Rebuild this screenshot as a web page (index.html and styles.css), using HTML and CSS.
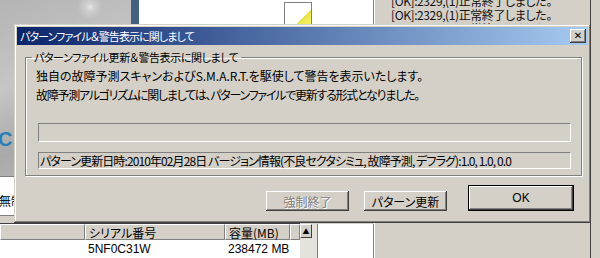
FILE: index.html
```html
<!DOCTYPE html>
<html lang="ja">
<head>
  <meta charset="UTF-8" />
  <title>パターンファイル＆警告表示に関しまして</title>
  <link rel="stylesheet" href="styles.css">
</head>
<body>
  <div class="desktop">

    <!-- background windows -->
    <div class="bg-photo"><span class="bg-c">C</span></div>
    <div class="bg-bar"></div>
    <div class="bg-white">
      <div class="bg-note"></div>
    </div>
    <div class="bg-log">
      <div class="log-line cut-top">[OK]:2329,(1)正常終了しました。</div>
      <div class="log-line">[OK]:2329,(1)正常終了しました。</div>
      <div class="log-line">[OK]:2329,(1)正常終了しました。</div>
    </div>
    <div class="bg-left-panel"><span class="left-text">無制限</span></div>

    <div class="bg-list">
      <div class="list-head">
        <div class="col col-blank"></div>
        <div class="col col-serial">シリアル番号</div>
        <div class="col col-size">容量(MB)</div>
        <div class="col col-rest"></div>
      </div>
      <div class="list-row">
        <div class="cell col-blank"></div>
        <div class="cell col-serial">5NF0C31W</div>
        <div class="cell col-size">238472 MB</div>
      </div>
    </div>
    <div class="bg-scroll">
      <div class="scroll-up">&#9650;</div>
    </div>
    <div class="bg-side"></div>

    <!-- dialog -->
    <div class="dialog">
      <div class="titlebar">
        <span class="title">パターンファイル＆警告表示に関しまして</span>
        <span class="close">&#10005;</span>
      </div>

      <fieldset class="group">
        <legend>パターンファイル更新＆警告表示に関しまして</legend>
        <p class="msg">独自の故障予測スキャンおよびS.M.A.R.T.を駆使して警告を表示いたします。</p>
        <p class="msg msg-narrow">故障予測アルゴリズムに関しましては、パターンファイルで更新する形式となりました。</p>
        <div class="progress"></div>
        <div class="status">パターン更新日時:2010年02月28日 バージョン情報(不良セクタシミュ, 故障予測, デフラグ):1.0, 1.0, 0.0</div>
      </fieldset>

      <div class="buttons">
        <button class="btn" disabled>強制終了</button>
        <button class="btn btn-update">パターン更新</button>
        <button class="btn btn-ok">OK</button>
      </div>
    </div>

  </div>
</body>
</html>
```

FILE: styles.css
```css
body {
  margin: 0;
  background: #d4d0c8;
  font-family: "Noto Sans CJK JP", "Liberation Sans", sans-serif;
  font-size: 12px;
  color: #000;
}

.desktop {
  position: relative;
  width: 600px;
  height: 258px;
  overflow: hidden;
  background: #d4d0c8;
  font-feature-settings: "palt";
}

/* ---------- background ---------- */

.bg-photo {
  position: absolute;
  left: 0;
  top: 0;
  width: 131px;
  height: 176px;
  background:
    radial-gradient(circle at 90px 7px, #e6e6e6 0, #d0d0d0 4px, transparent 12px),
    linear-gradient(160deg, #b4b4b4, #c6c6c6 40%, #a9a9a9 70%, #bdbdbd);
}

.bg-c {
  position: absolute;
  left: -2px;
  top: 128px;
  font-family: "Liberation Sans", sans-serif;
  font-weight: bold;
  font-size: 20px;
  color: #2a7fb8;
}

.bg-bar {
  position: absolute;
  left: 131px;
  top: 0;
  width: 8px;
  height: 26px;
  background: #44607e;
}

.bg-white {
  position: absolute;
  left: 139px;
  top: 0;
  width: 234px;
  height: 26px;
  background: #fff;
  border-right: 1px solid #808080;
}

.bg-note {
  position: absolute;
  left: 145px;
  top: 2px;
  width: 26px;
  height: 26px;
  border: 1px solid #808080;
  background: linear-gradient(135deg, #fff 62%, #e6e24a 63%, #f4ee5c 80%);
}

.bg-log {
  position: absolute;
  left: 374px;
  top: 0;
  width: 217px;
  height: 258px;
  border-left: 1px solid #fff;
  border-right: 1px solid #404040;
  padding-left: 16px;
  box-sizing: border-box;
  overflow: hidden;
}

.log-line {
  height: 14px;
  line-height: 14px;
  white-space: nowrap;
  font-size: 12px;
  letter-spacing: -0.4px;
  color: #111;
}

.log-line.cut-top {
  margin-top: -6px;
}

.bg-left-panel {
  position: absolute;
  left: 0;
  top: 176px;
  width: 14px;
  height: 38px;
  background: #fff;
  border-top: 1px solid #808080;
  border-bottom: 1px solid #808080;
  overflow: hidden;
}

.left-text {
  position: absolute;
  left: -1px;
  top: 15px;
  white-space: nowrap;
  font-size: 12px;
}

.bg-list {
  position: absolute;
  left: 0;
  top: 223px;
  width: 300px;
  height: 35px;
  background: #fff;
  border-top: 1px solid #404040;
}

.list-head {
  display: flex;
  height: 16px;
  background: #d4d0c8;
}

.list-head .col {
  box-sizing: border-box;
  height: 16px;
  line-height: 15px;
  padding-left: 3px;
  border-top: 1px solid #fff;
  border-left: 1px solid #fff;
  border-right: 1px solid #808080;
  border-bottom: 1px solid #808080;
  white-space: nowrap;
}

.col-blank { width: 85px; }
.col-serial { width: 140px; }
.col-size { width: 65px; }
.col-rest { flex: 1; }

.list-row {
  display: flex;
  height: 19px;
  line-height: 19px;
}

.list-row .cell {
  box-sizing: border-box;
  padding-left: 3px;
  font-family: "Liberation Sans", sans-serif;
  font-size: 12px;
}

.bg-scroll {
  position: absolute;
  left: 300px;
  top: 224px;
  width: 17px;
  height: 34px;
  background: #e4e2dc;
  border-right: 1px solid #808080;
}

.scroll-up {
  width: 12px;
  height: 14px;
  box-sizing: border-box;
  background: #d4d0c8;
  border-top: 1px solid #fff;
  border-left: 1px solid #fff;
  border-right: 1px solid #404040;
  border-bottom: 1px solid #404040;
  font-size: 7px;
  line-height: 12px;
  text-align: center;
}

.bg-side {
  position: absolute;
  left: 318px;
  top: 224px;
  width: 55px;
  height: 34px;
  background: #fff;
  border-right: 1px solid #808080;
}

/* ---------- dialog ---------- */

.dialog {
  position: absolute;
  left: 14px;
  top: 24px;
  width: 577px;
  height: 199px;
  box-sizing: border-box;
  padding: 3px;
  background: #d4d0c8;
  box-shadow:
    inset -1px -1px 0 #404040,
    inset 1px 1px 0 #d4d0c8,
    inset -2px -2px 0 #808080,
    inset 2px 2px 0 #fff;
  display: flex;
  flex-direction: column;
}

.titlebar {
  display: flex;
  align-items: center;
  justify-content: space-between;
  height: 18px;
  padding: 0 2px 0 3px;
  background: linear-gradient(to right, #0a246a, #a6caf0);
}

.title {
  color: #fff;
  font-size: 11px;
  letter-spacing: -0.9px;
  white-space: nowrap;
}

.close {
  width: 16px;
  height: 14px;
  box-sizing: border-box;
  background: #d4d0c8;
  box-shadow:
    inset -1px -1px 0 #404040,
    inset 1px 1px 0 #fff,
    inset -2px -2px 0 #808080;
  font-family: "DejaVu Sans", sans-serif;
  font-size: 10px;
  font-weight: bold;
  line-height: 14px;
  text-align: center;
  color: #000;
}

.group {
  margin: 5px 6px 0 8px;
  padding: 2px 10px 6px 10px;
  border: 1px solid #808080;
  box-shadow: 1px 1px 0 #fff, inset 1px 1px 0 #fff;
  min-width: 0;
}

.group legend {
  padding: 0 2px;
  margin-left: -4px;
  font-size: 11px;
  letter-spacing: -0.4px;
  line-height: 14px;
  white-space: nowrap;
}

.msg {
  margin: 0;
  line-height: 19px;
  white-space: nowrap;
}

.msg-narrow {
  letter-spacing: -1.25px;
}

.progress {
  margin: 19px 0 0 2px;
  height: 19px;
  box-sizing: border-box;
  border-top: 1px solid #808080;
  border-left: 1px solid #808080;
  border-right: 1px solid #fff;
  border-bottom: 1px solid #fff;
}

.status {
  margin: 10px 0 0 2px;
  height: 17px;
  box-sizing: border-box;
  padding-left: 1px;
  line-height: 15px;
  letter-spacing: -0.9px;
  white-space: nowrap;
  border-top: 1px solid #808080;
  border-left: 1px solid #808080;
  border-right: 1px solid #fff;
  border-bottom: 1px solid #fff;
}

.buttons {
  display: flex;
  justify-content: flex-end;
  align-items: flex-end;
  gap: 15px;
  margin-top: auto;
  padding: 0 14px 9px 0;
}

.btn {
  font-family: inherit;
  font-size: 12px;
  font-feature-settings: "palt";
  width: 83px;
  height: 20px;
  padding: 0;
  border: none;
  background: #d4d0c8;
  color: #000;
  box-shadow:
    inset -1px -1px 0 #404040,
    inset 1px 1px 0 #fff,
    inset -2px -2px 0 #808080;
}

.btn:disabled {
  color: #808080;
  text-shadow: 1px 1px 0 #fff;
}

.btn-ok {
  width: 106px;
  height: 26px;
  margin-left: 6px;
  border: 1px solid #000;
  font-family: "Liberation Sans", sans-serif;
}
```
